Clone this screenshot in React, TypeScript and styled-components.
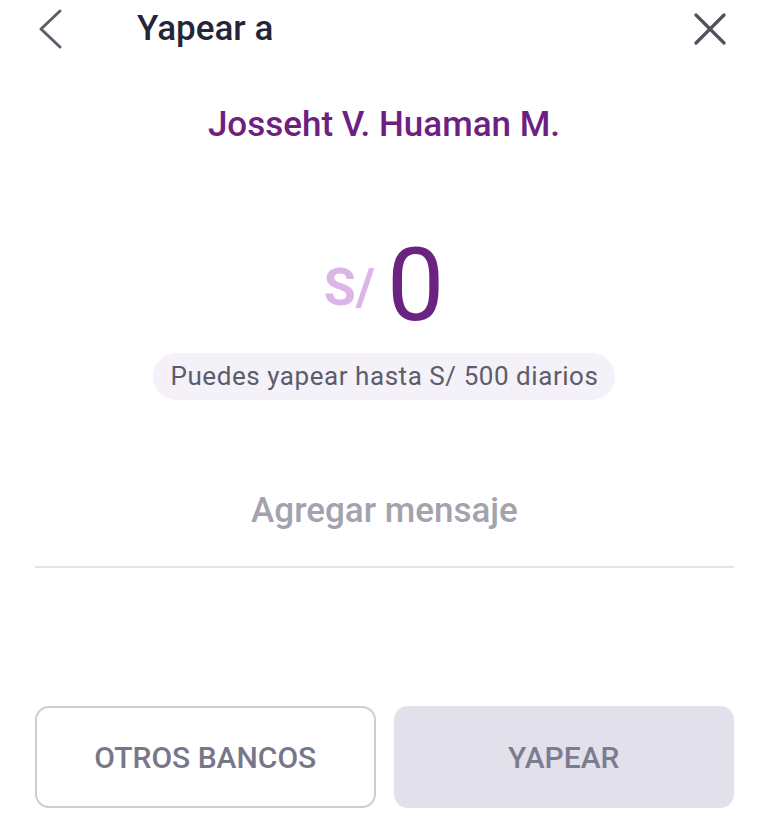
import React from "react";
import styled, { createGlobalStyle } from "styled-components";

const GlobalStyle = createGlobalStyle`
  html, body {
    margin: 0;
    padding: 0;
    background: #ffffff;
  }
  body {
    font-family: Roboto, "Noto Sans", "Liberation Sans", sans-serif;
    -webkit-font-smoothing: antialiased;
  }
  * { box-sizing: border-box; }
`;

const Screen = styled.div`
  width: 768px;
  height: 813px;
  background: #ffffff;
  display: flex;
  flex-direction: column;
  overflow: hidden;
`;

const Header = styled.header`
  height: 58px;
  display: flex;
  align-items: center;
  padding: 0 42px 0 38px;
`;

const IconButton = styled.button`
  border: none;
  background: none;
  padding: 0;
  margin: 0;
  display: flex;
  align-items: center;
  justify-content: center;
  cursor: pointer;
`;

const Title = styled.h1`
  margin: 0 0 0 73px;
  flex: 1;
  font-size: 35px;
  line-height: 58px;
  font-weight: 500;
  color: #25253a;
`;

const Recipient = styled.div`
  margin-top: 47px;
  text-align: center;
  font-size: 35px;
  line-height: 40px;
  font-weight: 500;
  color: #6c2180;
`;

const AmountRow = styled.div`
  margin-top: 89px;
  display: flex;
  justify-content: center;
  align-items: center;
  gap: 12px;
  height: 102px;
`;

const Currency = styled.span`
  font-size: 52px;
  line-height: 52px;
  font-weight: 700;
  color: #dcb6e7;
  padding-top: 6px;
`;

const Amount = styled.span`
  font-size: 102px;
  line-height: 102px;
  font-weight: 400;
  color: #6b2381;
`;

const LimitPill = styled.div`
  margin-top: 17px;
  align-self: center;
  height: 47px;
  padding: 0 17px 0 18px;
  border-radius: 24px;
  background: #f4f1f8;
  font-size: 26px;
  line-height: 47px;
  letter-spacing: 0.55px;
  color: #5c5c6b;
  white-space: nowrap;
`;

const MessageField = styled.div`
  margin: 91px 34px 0 35px;
  padding-bottom: 35px;
  border-bottom: 2px solid #e3e3e8;
  text-align: center;
  font-size: 35px;
  line-height: 40px;
  font-weight: 500;
  color: #a3a3ae;
`;

const Actions = styled.div`
  margin-top: 138px;
  padding: 0 34px 0 35px;
  display: grid;
  grid-template-columns: 1fr 1fr;
  gap: 18px;
`;

const ActionButton = styled.button<{ $variant: "outline" | "filled" }>`
  height: 102px;
  border-radius: 14px;
  font-family: Roboto, "Noto Sans", "Liberation Sans", sans-serif;
  font-size: 30px;
  font-weight: 500;
  color: ${(p) => (p.$variant === "outline" ? "#77778a" : "#7c7c8f")};
  background: ${(p) => (p.$variant === "outline" ? "#ffffff" : "#e1e0eb")};
  border: ${(p) => (p.$variant === "outline" ? "2px solid #cdcdd2" : "none")};
  display: flex;
  align-items: center;
  justify-content: center;
  padding: 0;
`;

const BackIcon = () => (
  <svg width="26" height="40" viewBox="0 0 26 40" fill="none">
    <polyline
      points="22,2 3,20 22,38"
      stroke="#5e5e68"
      strokeWidth="3"
      strokeLinecap="round"
      strokeLinejoin="round"
    />
  </svg>
);

const CloseIcon = () => (
  <svg width="32" height="32" viewBox="0 0 32 32" fill="none">
    <path
      d="M2 2 L30 30 M30 2 L2 30"
      stroke="#52525f"
      strokeWidth="3.2"
      strokeLinecap="round"
    />
  </svg>
);

export default function App() {
  return (
    <>
      <GlobalStyle />
      <Screen>
        <Header>
          <IconButton aria-label="Volver">
            <BackIcon />
          </IconButton>
          <Title>Yapear a</Title>
          <IconButton aria-label="Cerrar">
            <CloseIcon />
          </IconButton>
        </Header>
        <Recipient>Josseht V. Huaman M.</Recipient>
        <AmountRow>
          <Currency>S/</Currency>
          <Amount>0</Amount>
        </AmountRow>
        <LimitPill>Puedes yapear hasta S/ 500 diarios</LimitPill>
        <MessageField>Agregar mensaje</MessageField>
        <Actions>
          <ActionButton $variant="outline">OTROS BANCOS</ActionButton>
          <ActionButton $variant="filled">YAPEAR</ActionButton>
        </Actions>
      </Screen>
    </>
  );
}
